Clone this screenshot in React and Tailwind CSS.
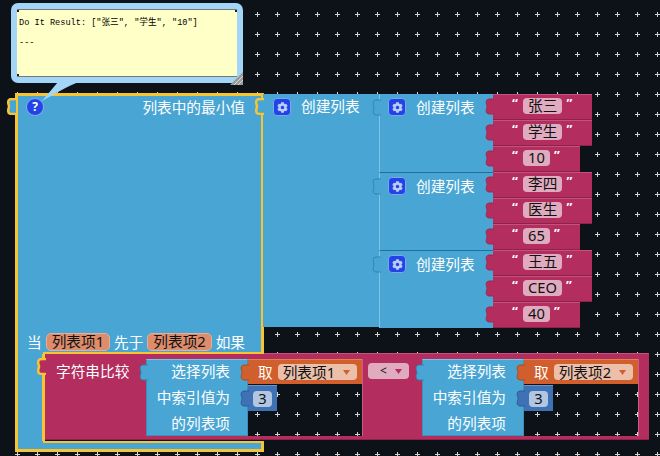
import { FaCog } from 'react-icons/fa'

const cjk = { fontFamily: '"Noto Sans", "Noto Sans CJK SC", sans-serif' }

function Grid() {
  return (
    <svg className="absolute inset-0" width="660" height="456">
      <defs>
        <pattern id="plus" x="7" y="4" width="20" height="20" patternUnits="userSpaceOnUse">
          <path d="M8 10.5h5M10.5 8v5" stroke="#d4d4d4" strokeWidth="1" />
        </pattern>
      </defs>
      <rect width="660" height="456" fill="url(#plus)" />
    </svg>
  )
}

const tabPath = 'M9 1H7.5C4 1 1.2 .6 1.2 4.2C1.2 6.6 2 7 2 8.5C2 10 1.2 10.4 1.2 12.8C1.2 16.4 4 16 7.5 16H9'

// blockly style puzzle tab, sits to the left of its block
function Tab({ fill, stroke, top, width = 2.5 }) {
  return (
    <svg className={`absolute -left-[8px] z-20 ${top}`} width="9" height="17" viewBox="0 0 9 17">
      <path d={tabPath} fill={fill} stroke={stroke} strokeWidth={width} />
    </svg>
  )
}

function Gear() {
  return (
    <span className="flex h-[18px] w-[18px] shrink-0 items-center justify-center rounded-[4px] border border-[#7ea4f2] bg-[#2044e6] text-[#bccdfb]">
      <FaCog size={11} />
    </span>
  )
}

function TextBlock({ value }) {
  return (
    <div className="relative flex h-[26px] w-fit items-center border-t border-b border-t-[#c4527e] border-b-[#8e2249] bg-[#b32d5e] pb-[3px] pl-[18px] pr-[19px]">
      <Tab fill="#b32d5e" stroke="#a02853" width={1} top="top-[3px]" />
      <span className="w-[8px] -translate-y-[2px] text-center text-[13px] font-bold leading-[13px] text-white">“</span>
      <span className="ml-[4px] h-[16px] rounded-[4px] bg-[#e0abbf] px-[5px] text-[14.67px] leading-[15px] text-[#111]">{value}</span>
      <span className="ml-[3px] w-[8px] -translate-y-[2px] text-center text-[13px] font-bold leading-[13px] text-white">”</span>
    </div>
  )
}

function InnerList({ items, first }) {
  return (
    <div className="flex">
      <div className={`relative flex h-[78px] w-[114px] border-l border-l-[#7cc3e6] bg-[#49a6d4] pl-[8px] pt-[4px] ${first ? '' : 'border-t border-t-[#1f6f98]'}`}>
        <Tab fill="#49a6d4" stroke="#2f84ae" width={1} top="top-[5px]" />
        <div className="flex h-[18px] items-center gap-[10px] text-[14.67px] leading-[16px] text-white">
          <Gear />
          <span>创建列表</span>
        </div>
      </div>
      <div className="flex flex-col">
        {items.map(v => <TextBlock key={v} value={v} />)}
      </div>
    </div>
  )
}

function VarBlock({ name }) {
  return (
    <div className="relative flex h-[25px] w-[114px] items-center border-t border-t-[#e0824f] bg-[#d05f2d] pl-[10px] text-[14.67px] leading-[16px] text-white">
      <Tab fill="#d05f2d" stroke="#a84a20" width={1} top="top-[4px]" />
      <span>取</span>
      <span className="ml-[5px] flex h-[16px] w-[79px] items-center rounded-[4px] bg-[#ecbfab] pl-[5px] leading-[15px] text-[#111]">
        {name}
        <svg className="ml-[8px]" width="7" height="5" viewBox="0 0 7 5"><path d="M0 0h7L3.5 5z" fill="#d05f2d" /></svg>
      </span>
    </div>
  )
}

function NumBlock() {
  return (
    <div className="relative mt-[1px] flex h-[26px] w-[29px] items-center justify-center border-t border-t-[#6d94cb] bg-[#3f71b5]">
      <Tab fill="#3f71b5" stroke="#2f5a96" width={1} top="top-[4px]" />
      <span className="h-[16px] w-[19px] rounded-[4px] bg-[#b2c6e1] text-center text-[14.67px] leading-[15px] text-[#111]">3</span>
    </div>
  )
}

function SelectBlock({ name }) {
  return (
    <>
      <div className="relative flex w-[102px] flex-col border border-[#3f8fb8] border-t-[#7cc3e6] bg-[#49a6d4] pr-[17px] text-right text-[14.67px] leading-[26px] text-white">
        <Tab fill="#49a6d4" stroke="#2f84ae" width={1} top="top-[4px]" />
        <span className="-mt-[2px]">选择列表</span>
        <span>中索引值为</span>
        <span>的列表项</span>
      </div>
      <div className="w-[115px] border-r border-r-[#cf5a85]">
        <VarBlock name={name} />
        <NumBlock />
      </div>
    </>
  )
}

function CompareBlock() {
  return (
    <div className="absolute left-[45px] top-[353px] flex w-[604px] flex-col">
      <Tab fill="#b32d5e" stroke="#f7c433" top="top-[5px]" />
      <div className="h-[6px] border-t border-t-[#c94f7d] bg-[#b32d5e]" />
      <div className="flex h-[77px]">
        <div className="w-[101px] bg-[#b32d5e] pl-[11px] pt-[3px] text-[14.67px] leading-[18px] text-white">字符串比较</div>
        <SelectBlock name="列表项1" />
        <div className="w-[59px] bg-[#b32d5e] pl-[5px] pt-[4px]">
          <span className="flex h-[16px] w-[41px] items-center gap-[8px] rounded-[4px] bg-[#e0abbf] pl-[12px] text-[12px] leading-[16px] text-[#111]">
            &lt;
            <svg width="7" height="5" viewBox="0 0 7 5"><path d="M0 0h7L3.5 5z" fill="#b32d5e" /></svg>
          </span>
        </div>
        <SelectBlock name="列表项2" />
        <div className="w-[10px] bg-[#b32d5e]" />
      </div>
      <div className="h-[4px] border-b border-b-[#8e2249] bg-[#b32d5e]" />
    </div>
  )
}

function OrangeField({ children }) {
  return <span className="h-[18px] rounded-[5px] border border-[#e9ae95] bg-[#dd8c6c] px-[5px] leading-[15px] text-[#111]">{children}</span>
}

function MainBlock() {
  return (
    <div className="absolute left-[15px] top-[93px] z-10 flex w-[249px] flex-col">
      <Tab fill="#49a6d4" stroke="#f7c433" top="top-[5px]" />
      <div className="flex h-[259px] flex-col justify-between border-x-[3px] border-t-[3px] border-[#f7c433] bg-[#49a6d4] pb-[1px] pl-[9px] pr-[16px] pt-[2px] text-[14.67px] leading-[16px] text-white">
        <div className="flex h-[18px] items-center justify-between">
          <span className="flex h-[18px] w-[18px] -translate-x-[1px] items-center justify-center rounded-full border border-[#8eaaf0] bg-[#2044e6] text-[12px] font-bold leading-none">?</span>
          <span>列表中的最小值</span>
        </div>
        <div className="flex h-[18px] items-center gap-[4px]">
          <span>当</span>
          <OrangeField>列表项1</OrangeField>
          <span>先于</span>
          <OrangeField>列表项2</OrangeField>
          <span>如果</span>
        </div>
      </div>
      <div className="flex h-[2px]">
        <div className="w-[28px] border-l-[3px] border-[#f7c433] bg-[#49a6d4]" />
        <div className="flex-1 bg-[#f7c433]" />
      </div>
      <div className="h-[87px] w-[30px] border-x-[3px] border-[#f7c433] bg-[#49a6d4]" />
      <div className="flex h-[2px]">
        <div className="w-[28px] border-l-[3px] border-[#f7c433] bg-[#49a6d4]" />
        <div className="flex-1 bg-[#f7c433]" />
      </div>
      <div className="h-[9px] border-x-[3px] border-b-[3px] border-[#f7c433] bg-[#49a6d4]" />
    </div>
  )
}

function ListStack() {
  return (
    <div className="absolute left-[263px] top-[94px] z-20 flex">
      <div className="relative flex h-[233px] w-[116px] gap-[10px] bg-[#49a6d4] pl-[10px] pt-[4px] text-[14.67px] leading-[16px] text-white">
        <Tab fill="#49a6d4" stroke="#f7c433" top="top-[4px]" />
        <Gear />
        <span>创建列表</span>
      </div>
      <div className="flex flex-col">
        <InnerList first items={['张三', '学生', '10']} />
        <InnerList items={['李四', '医生', '65']} />
        <InnerList items={['王五', 'CEO', '40']} />
      </div>
    </div>
  )
}

function Comment() {
  return (
    <div className="absolute left-[11px] top-[3px] z-30 h-[80px] w-[232px] rounded-[7px] bg-[#a3d5f9] p-[6px]">
      <svg className="absolute left-[30px] top-[79px]" width="40" height="20" viewBox="0 0 40 20">
        <path d="M17 0h21C26 4 14 12 1 19z" fill="#a3d5f9" />
      </svg>
      <div className="relative h-full border-y border-[#777] bg-[#ffffc8] pl-[2px] pt-[3px] font-['Liberation_Mono','Noto_Sans_CJK_SC',monospace] text-[8.6px] leading-[20px] text-black">
        <p>Do It Result: ["张三", "学生", "10"]</p>
        <p>---</p>
        <span className="absolute right-0 top-0 h-[2px] w-[2px] bg-[#222]" />
        <span className="absolute bottom-0 left-0 h-[2px] w-[2px] bg-[#222]" />
        <span className="absolute left-0 top-0 h-[2px] w-[2px] bg-[#222]" />
      </div>
      <svg className="absolute bottom-[-2px] right-0" width="13" height="13" viewBox="0 0 13 13">
        <path d="M13 0v13H0z" fill="#9a9a9a" />
        <path d="M13 4l-9 9M13 8l-5 5" stroke="#d8d8d8" strokeWidth="1" />
      </svg>
    </div>
  )
}

export default function App() {
  return (
    <div className="relative h-[456px] w-[660px] overflow-hidden bg-[#0d1118]" style={cjk}>
      <Grid />
      <CompareBlock />
      <MainBlock />
      <ListStack />
      <Comment />
    </div>
  )
}
